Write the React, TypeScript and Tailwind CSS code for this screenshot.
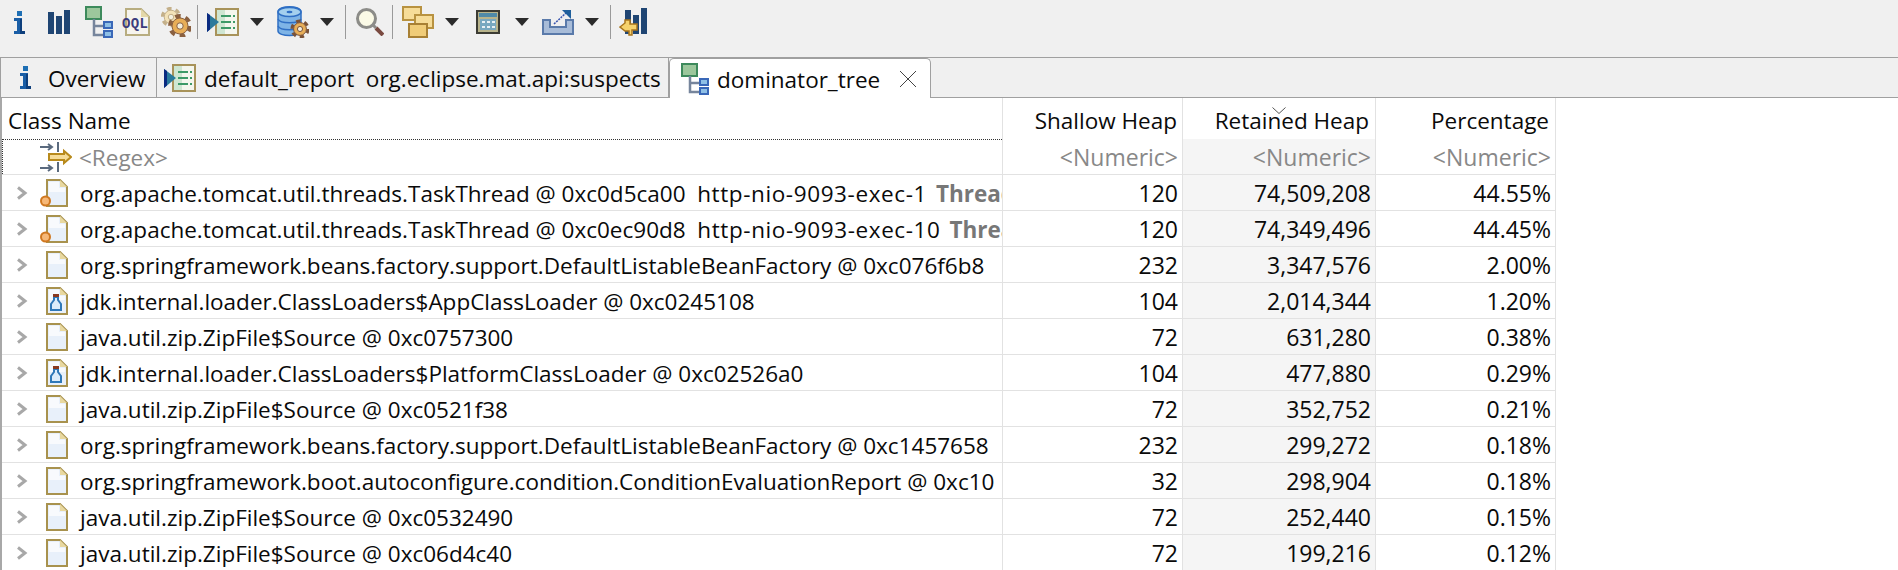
const rows = [
  { name: "org.apache.tomcat.util.threads.TaskThread @ 0xc0d5ca00  ", thread: "http-nio-9093-exec-1", extra: "Thread", icon: "thread", shallow: "120", retained: "74,509,208", pct: "44.55%" },
  { name: "org.apache.tomcat.util.threads.TaskThread @ 0xc0ec90d8  ", thread: "http-nio-9093-exec-10", extra: "Thread", icon: "thread", shallow: "120", retained: "74,349,496", pct: "44.45%" },
  { name: "org.springframework.beans.factory.support.DefaultListableBeanFactory @ 0xc076f6b8", icon: "file", shallow: "232", retained: "3,347,576", pct: "2.00%" },
  { name: "jdk.internal.loader.ClassLoaders$AppClassLoader @ 0xc0245108", icon: "loader", shallow: "104", retained: "2,014,344", pct: "1.20%" },
  { name: "java.util.zip.ZipFile$Source @ 0xc0757300", icon: "file", shallow: "72", retained: "631,280", pct: "0.38%" },
  { name: "jdk.internal.loader.ClassLoaders$PlatformClassLoader @ 0xc02526a0", icon: "loader", shallow: "104", retained: "477,880", pct: "0.29%" },
  { name: "java.util.zip.ZipFile$Source @ 0xc0521f38", icon: "file", shallow: "72", retained: "352,752", pct: "0.21%" },
  { name: "org.springframework.beans.factory.support.DefaultListableBeanFactory @ 0xc1457658", icon: "file", shallow: "232", retained: "299,272", pct: "0.18%" },
  { name: "org.springframework.boot.autoconfigure.condition.ConditionEvaluationReport @ 0xc10", icon: "file", shallow: "32", retained: "298,904", pct: "0.18%" },
  { name: "java.util.zip.ZipFile$Source @ 0xc0532490", icon: "file", shallow: "72", retained: "252,440", pct: "0.15%" },
  { name: "java.util.zip.ZipFile$Source @ 0xc06d4c40", icon: "file", shallow: "72", retained: "199,216", pct: "0.12%" },
];

function InfoIcon() {
  return (
    <svg width="11" height="23" viewBox="0 0 11 23" className="shrink-0">
      <rect x="3" y="0" width="5" height="5" fill="#1e6fb4" />
      <path d="M0 7h8v13h3v3H0v-3h3v-10H0z" fill="#1a5ea6" />
      <path d="M6 8h2v12h3v3H6z" fill="#0e3f7c" />
    </svg>
  );
}

function BarsIcon() {
  return (
    <svg width="22" height="24" viewBox="0 0 22 24" fill="#1f4573" className="shrink-0">
      <rect x="0" y="2" width="6" height="22" />
      <rect x="8" y="6" width="6" height="18" />
      <rect x="16" y="0" width="6" height="24" />
    </svg>
  );
}

function TreeIcon() {
  return (
    <svg width="28" height="32" viewBox="0 0 28 32" className="shrink-0">
      <rect x="1" y="1" width="15" height="12" fill="#9cc79c" stroke="#3d8a5c" strokeWidth="2" />
      <path d="M9 13v16h9M9 20h9" fill="none" stroke="#76859c" strokeWidth="2.5" />
      <rect x="19" y="16" width="8" height="6" fill="#8fc0e6" stroke="#3a68b8" strokeWidth="2" />
      <rect x="19" y="25" width="8" height="6" fill="#8fc0e6" stroke="#3a68b8" strokeWidth="2" />
    </svg>
  );
}

function OqlIcon() {
  return (
    <svg width="28" height="28" viewBox="0 0 28 28" className="shrink-0">
      <path d="M4 1h15l8 8v18H4z" fill="#f6f4ee" stroke="#b8ad80" strokeWidth="2" />
      <path d="M19 1v8h8z" fill="#e4d8a8" />
      <text x="0" y="20" fontFamily="Liberation Mono" fontWeight="700" fontSize="14" textLength="26" fill="#3c3c7c">
        OQL
      </text>
    </svg>
  );
}

function Gear({ x, y, r, fill, stroke }: { x: number; y: number; r: number; fill: string; stroke: string }) {
  return (
    <g>
      <circle cx={x} cy={y} r={r} fill="none" stroke={stroke} strokeWidth={r * 0.4} strokeDasharray={`${r * 0.55} ${r * 0.5}`} />
      <circle cx={x} cy={y} r={r * 0.8} fill={fill} stroke={stroke} strokeWidth="1" />
      <circle cx={x} cy={y} r={r * 0.32} fill="#f4f0e0" stroke={stroke} strokeWidth="1" />
    </g>
  );
}

function GearsIcon() {
  return (
    <svg width="30" height="30" viewBox="0 0 30 30" className="shrink-0">
      <Gear x={10} y={10} r={8.5} fill="#f3e2b8" stroke="#c4b08a" />
      <Gear x={19} y={19} r={10} fill="#e8ae58" stroke="#8a6040" />
    </svg>
  );
}

function ReportIcon() {
  return (
    <svg width="32" height="28" viewBox="0 0 32 28" className="shrink-0">
      <rect x="9" y="1" width="22" height="26" fill="#f4f6ee" stroke="#a8935a" strokeWidth="2" />
      <rect x="10" y="2" width="8" height="24" fill="#cfe6d2" />
      <path d="M14 8h10M14 14h10M14 20h10" stroke="#3d9a68" strokeWidth="2" />
      <path d="M26 8h2M26 14h2M26 20h2" stroke="#3d9a68" strokeWidth="2" />
      <path d="M0 5l12 9-12 10z" fill="#2a7a9c" />
      <path d="M0 5v19l3-2.5V7z" fill="#0a2a80" />
    </svg>
  );
}

function DbIcon() {
  return (
    <svg width="32" height="32" viewBox="0 0 32 32" className="shrink-0">
      <path d="M1 6c0-7 23-7 23 0v19c0 6-23 6-23 0z" fill="#7eb4e6" stroke="#2f6fc4" strokeWidth="1.5" />
      <ellipse cx="12.5" cy="6" rx="11.5" ry="4.5" fill="#a4d0ee" stroke="#2f6fc4" strokeWidth="1.5" />
      <ellipse cx="12.5" cy="6" rx="3" ry="1.2" fill="#2f6fc4" />
      <path d="M1 13c2 5 21 5 23 0M1 20c2 5 21 5 23 0" fill="none" stroke="#2f6fc4" strokeWidth="1.5" />
      <Gear x={23} y={23} r={8} fill="#e8ae58" stroke="#7a5238" />
    </svg>
  );
}

function SearchIcon() {
  return (
    <svg width="28" height="28" viewBox="0 0 28 28" className="shrink-0">
      <circle cx="10.5" cy="10.5" r="9" fill="#fbfae6" stroke="#8c8c88" strokeWidth="3" />
      <path d="M17 17l3 3" stroke="#8c8c88" strokeWidth="3" />
      <path d="M20 20l7 7" stroke="#7a4a40" strokeWidth="4" />
    </svg>
  );
}

function StackIcon() {
  return (
    <svg width="32" height="32" viewBox="0 0 32 32" className="shrink-0">
      <rect x="1" y="1" width="18" height="13" fill="#f6dc98" stroke="#b89240" strokeWidth="2" />
      <rect x="13" y="9" width="18" height="13" fill="#f6dc98" stroke="#b89240" strokeWidth="2" />
      <rect x="7" y="18" width="18" height="13" fill="#f0cc78" stroke="#a88034" strokeWidth="2" />
    </svg>
  );
}

function CalcIcon() {
  return (
    <svg width="24" height="24" viewBox="0 0 24 24" className="shrink-0">
      <rect x="1" y="1" width="22" height="22" fill="#b8b48c" stroke="#3c3c34" strokeWidth="2" />
      <rect x="3" y="3" width="18" height="4" fill="#4f8aa8" />
      <rect x="4" y="9" width="16" height="11" fill="#78a8c0" />
      <path d="M6 11h3v2H6zM11 11h3v2h-3zM16 11h3v2h-3zM6 16h3v2H6zM11 16h3v2h-3zM16 16h3v2h-3z" fill="#e8f0f4" />
    </svg>
  );
}

function ExportIcon() {
  return (
    <svg width="32" height="26" viewBox="0 0 32 26" className="shrink-0">
      <path d="M1 11v14h30V11h-7v7H8v-7z" fill="#a8bcd8" stroke="#5a7aaa" strokeWidth="2" />
      <path d="M12 15l12-11" stroke="#3a56b0" strokeWidth="1.5" strokeDasharray="2 1" />
      <path d="M20 1h9v9z" fill="#1f5f9c" />
    </svg>
  );
}

function ChartHandIcon() {
  return (
    <svg width="28" height="28" viewBox="0 0 28 28" className="shrink-0">
      <rect x="6" y="2" width="6" height="24" fill="#1f4573" />
      <rect x="14" y="7" width="6" height="19" fill="#1f4573" />
      <rect x="22" y="0" width="6" height="26" fill="#1f4573" />
      <path d="M1 19l5-4v-3h5v4h7v6h-5v5h-3v-4H6z" fill="#f6d26c" stroke="#a8741c" strokeWidth="1.5" />
    </svg>
  );
}

function DropArrow({ className }: { className: string }) {
  return <div className={`h-0 w-0 shrink-0 border-x-[7px] border-t-[8px] border-x-transparent border-t-[#2b2b2b] ${className}`} />;
}

function FilterIcon() {
  return (
    <svg width="32" height="30" viewBox="0 0 32 30" className="shrink-0">
      <path d="M0 5h12M8 2l4 3-4 3M0 26h12M8 23l4 3-4 3" fill="none" stroke="#5a6a7e" strokeWidth="2" />
      <path d="M18 0v10M18 20v10" stroke="#5a6a7e" strokeWidth="2" />
      <path d="M9 12h15V9l7 6-7 6v-3H9z" fill="#f6dc98" stroke="#b88a1c" strokeWidth="2" />
    </svg>
  );
}

function RowChevron() {
  return (
    <svg width="12" height="14" viewBox="0 0 12 14" className="shrink-0">
      <path d="M2 1.5L9 7l-7 5.5" fill="none" stroke="#a8a8a8" strokeWidth="3" />
    </svg>
  );
}

function RowIcon({ kind }: { kind: string }) {
  return (
    <svg width="28" height="28" viewBox="0 0 28 28" className="ml-[12px] shrink-0">
      <path d="M7 1h13l7 7v19H7z" fill="#e8f0fa" stroke="#a8924e" strokeWidth="2" />
      <path d="M9 3h10v6h6v4H9z" fill="#f8fafd" />
      <path d="M20 1v7h7z" fill="#e8d8a0" />
      {kind === "thread" && <circle cx="5.5" cy="22" r="4.5" fill="#f6b878" stroke="#d07820" strokeWidth="2" />}
      {kind === "loader" && (
        <>
          <path d="M14 10h4v3l3 4v6H11v-6l3-4z" fill="#dcecfa" stroke="#2f78b8" strokeWidth="2" />
          <rect x="13" y="7" width="6" height="3" fill="#8a3a20" />
        </>
      )}
    </svg>
  );
}

function CloseIcon() {
  return (
    <svg width="18" height="18" viewBox="0 0 18 18" className="ml-[19px] shrink-0">
      <path d="M1 1l16 16M17 1L1 17" stroke="#444" strokeWidth="1" />
    </svg>
  );
}

function SortArrow() {
  return (
    <svg width="14" height="7" viewBox="0 0 14 7" className="absolute left-[89px] top-[9px]">
      <path d="M0.5 0.5L7 6.5l6.5-6" fill="none" stroke="#555" strokeWidth="1" />
    </svg>
  );
}

function Sep({ className }: { className: string }) {
  return <div className={`h-[34px] w-px shrink-0 bg-[#9a9a9a] ${className}`} />;
}

export default function App() {
  return (
    <div className="flex h-[570px] w-[1898px] flex-col overflow-hidden bg-white font-['Open_Sans',sans-serif] text-[22.5px] text-[#0a0a0a]">
      {/* toolbar */}
      <div className="h-[58px] shrink-0 border-b border-[#a0a0a0] bg-[#f0f0f0]">
        <div className="flex h-[44px] items-center pl-[14px]">
          <InfoIcon />
          <div className="ml-[23px]"><BarsIcon /></div>
          <div className="ml-[15px]"><TreeIcon /></div>
          <div className="ml-[9px]"><OqlIcon /></div>
          <div className="ml-[11px]"><GearsIcon /></div>
          <Sep className="ml-[6px]" />
          <div className="ml-[9px]"><ReportIcon /></div>
          <DropArrow className="ml-[11px]" />
          <div className="ml-[13px]"><DbIcon /></div>
          <DropArrow className="ml-[11px]" />
          <Sep className="ml-[11px]" />
          <div className="ml-[10px]"><SearchIcon /></div>
          <Sep className="ml-[8px]" />
          <div className="ml-[9px]"><StackIcon /></div>
          <DropArrow className="ml-[11px]" />
          <div className="ml-[17px]"><CalcIcon /></div>
          <DropArrow className="ml-[15px]" />
          <div className="ml-[13px]"><ExportIcon /></div>
          <DropArrow className="ml-[11px]" />
          <Sep className="ml-[11px]" />
          <div className="ml-[8px]"><ChartHandIcon /></div>
        </div>
      </div>

      {/* tabs */}
      <div className="flex h-[40px] shrink-0 items-stretch bg-[#f0f0f0]">
        <div className="flex w-[157px] items-center border-x border-b border-[#a0a0a0] pl-[19px]">
          <InfoIcon />
          <span className="ml-[17px] pt-[3px]">Overview</span>
        </div>
        <div className="flex w-[512px] items-center border-r border-b border-[#a0a0a0] pl-[7px]">
          <ReportIcon />
          <span className="ml-[8px] whitespace-pre pt-[3px]">default_report  org.eclipse.mat.api:suspects</span>
        </div>
        <div className="flex w-[262px] items-center rounded-t-[5px] border-x border-t border-[#a0a0a0] bg-white pl-[11px]">
          <TreeIcon />
          <span className="ml-[8px] pt-[3px]">dominator_tree</span>
          <CloseIcon />
        </div>
        <div className="flex-1 border-b border-[#a0a0a0]" />
      </div>

      {/* table */}
      <div className="flex-1 border-l-2 border-[#a8a8a8]">
        <div className="flex h-[41px]">
          <div className="flex w-[1001px] items-center border-r border-[#e2e2e2] pl-[6px] pt-[4px]">Class Name</div>
          <div className="flex w-[180px] items-center justify-end border-r border-[#e2e2e2] pr-[5px] pt-[4px]">Shallow Heap</div>
          <div className="relative flex w-[193px] items-center justify-end border-r border-[#e2e2e2] pr-[6px] pt-[4px]">
            <SortArrow />
            Retained Heap
          </div>
          <div className="flex w-[180px] items-center justify-end border-r border-[#e2e2e2] pr-[6px] pt-[4px]">Percentage</div>
        </div>

        <div className="flex h-[36px] text-[#888]">
          <div className="w-[1001px] border-r border-b border-[#e2e2e2]">
            <div className="flex h-full items-center border-t border-l border-dotted border-[#333] pl-[37px]">
              <FilterIcon />
              <span className="ml-[7px] pt-[1px]">&lt;Regex&gt;</span>
            </div>
          </div>
          <div className="flex w-[180px] items-center justify-end border-r border-b border-[#e2e2e2] pr-[4px] pt-[1px] text-[23px]">&lt;Numeric&gt;</div>
          <div className="flex w-[193px] items-center justify-end border-r border-b border-[#e2e2e2] bg-[#f5f5f5] pr-[4px] pt-[1px] text-[23px]">&lt;Numeric&gt;</div>
          <div className="flex w-[180px] items-center justify-end border-r border-b border-[#e2e2e2] pr-[4px] pt-[1px] text-[23px]">&lt;Numeric&gt;</div>
        </div>

        {rows.map((row) => (
          <div key={row.name} className="flex h-[36px]">
            <div className="flex w-[1001px] items-center overflow-hidden border-r border-b border-[#e2e2e2] pl-[14px]">
              <RowChevron />
              <RowIcon kind={row.icon} />
              <span className="ml-[12px] whitespace-pre pt-[2px]">
                {row.name}
                {row.thread && <span className="tracking-[0.6px]">{row.thread}</span>}
                {row.extra && <b className="ml-[9px] font-bold text-[#777]">{row.extra}</b>}
              </span>
            </div>
            <div className="flex w-[180px] items-center justify-end border-r border-b border-[#e2e2e2] pr-[4px] pt-[2px] text-[23px]">{row.shallow}</div>
            <div className="flex w-[193px] items-center justify-end border-r border-b border-[#e2e2e2] bg-[#f5f5f5] pr-[4px] pt-[2px] text-[23px]">{row.retained}</div>
            <div className="flex w-[180px] items-center justify-end border-r border-b border-[#e2e2e2] pr-[4px] pt-[2px] text-[23px]">{row.pct}</div>
          </div>
        ))}
      </div>
    </div>
  );
}
